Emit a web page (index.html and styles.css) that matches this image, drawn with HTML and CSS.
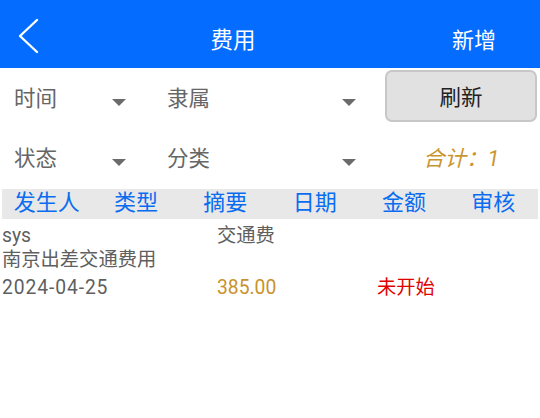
FILE: index.html
```html
<!DOCTYPE html>
<html lang="zh">
<head>
<meta charset="utf-8">
<title>费用</title>
<link rel="stylesheet" href="styles.css">
</head>
<body>
<header class="topbar">
  <div class="back">
    <svg width="24" height="36" viewBox="0 0 24 36"><polyline points="21,2 4,18 21,34" fill="none" stroke="#fff" stroke-width="2.4" stroke-linecap="round" stroke-linejoin="round"/></svg>
  </div>
  <div class="title">费用</div>
  <div class="add">新增</div>
</header>
<section class="filters">
  <div class="select sel-a"><span>时间</span><i class="arrow"></i></div>
  <div class="select sel-b"><span>隶属</span><i class="arrow"></i></div>
  <div class="btn-cell"><button class="refresh">刷新</button></div>
  <div class="select sel-a"><span>状态</span><i class="arrow"></i></div>
  <div class="select sel-b"><span>分类</span><i class="arrow"></i></div>
  <div class="total">合计：1</div>
</section>
<div class="thead">
  <span>发生人</span><span>类型</span><span>摘要</span><span>日期</span><span>金额</span><span>审核</span>
</div>
<div class="record">
  <div class="r1"><span class="c1">sys</span><span class="c2">交通费</span></div>
  <div class="r2">南京出差交通费用</div>
  <div class="r3"><span class="c1 date">2024-04-25</span><span class="c2 money">385.00</span><span class="c3 status">未开始</span></div>
</div>
</body>
</html>
```
FILE: styles.css
```css
html, body {
  margin: 0;
  padding: 0;
  background: #fff;
  font-family: Roboto, "Noto Sans CJK SC", sans-serif;
}
.topbar {
  height: 68px;
  background: #046cfe;
  display: flex;
  align-items: center;
  color: #fff;
}
.back {
  width: 60px;
  padding-left: 16px;
  box-sizing: border-box;
  display: flex;
  align-items: center;
  padding-top: 4px;
}
.title {
  flex: 1;
  text-align: center;
  font-size: 22.5px;
  padding-right: 60px;
  padding-left: 26px;
  padding-top: 8px;
  box-sizing: border-box;
}
.add {
  width: 100px;
  font-size: 22px;
  padding-left: 12px;
  padding-top: 8px;
  box-sizing: border-box;
}
.filters {
  display: grid;
  grid-template-columns: 153px 232px 1fr;
  grid-template-rows: 58px 62px;
}
.select {
  display: flex;
  align-items: center;
  color: #666;
  font-size: 21.5px;
  padding-left: 14px;
  box-sizing: border-box;
}
.select span { flex: 1; padding-bottom: 2px; }
.sel-a { padding-right: 27px; }
.sel-b { padding-right: 29px; }
.arrow {
  width: 0;
  height: 0;
  border-left: 7.5px solid transparent;
  border-right: 7.5px solid transparent;
  border-top: 7px solid #6b6b6b;
  margin-top: 10px;
}
.btn-cell {
  padding: 2px 3px 0 0;
}
.refresh {
  width: 152px;
  height: 52px;
  border: 2px solid #c7c7c7;
  border-radius: 7px;
  background: #e1e1e1;
  font-family: Roboto, "Noto Sans CJK SC", sans-serif;
  font-size: 21.5px;
  color: #222;
  padding: 0 0 2px 0;
}
.total {
  display: flex;
  align-items: center;
  padding-left: 38px;
  font-size: 21.5px;
  font-style: italic;
  color: #c9952f;
  padding-bottom: 2px;
}
.thead {
  margin: 1px 2px 0;
  height: 30px;
  background: #e8e8e8;
  display: grid;
  grid-template-columns: repeat(6, 1fr);
  align-items: center;
  text-align: center;
  color: #0a6cf0;
  font-size: 22px;
  line-height: 30px;
}
.thead span { position: relative; top: -1px; }
.record {
  color: #5f5f5f;
  font-size: 19.3px;
  padding-left: 2px;
  padding-top: 4px;
}
.r1, .r3 {
  display: grid;
  grid-template-columns: 215px 160px 1fr;
}
.r1 { line-height: 26px; }
.r2 { line-height: 22px; }
.r3 { line-height: 34px; }
.date { letter-spacing: 0.9px; }
.money { color: #c9922c; }
.status { color: #e00000; }
```
